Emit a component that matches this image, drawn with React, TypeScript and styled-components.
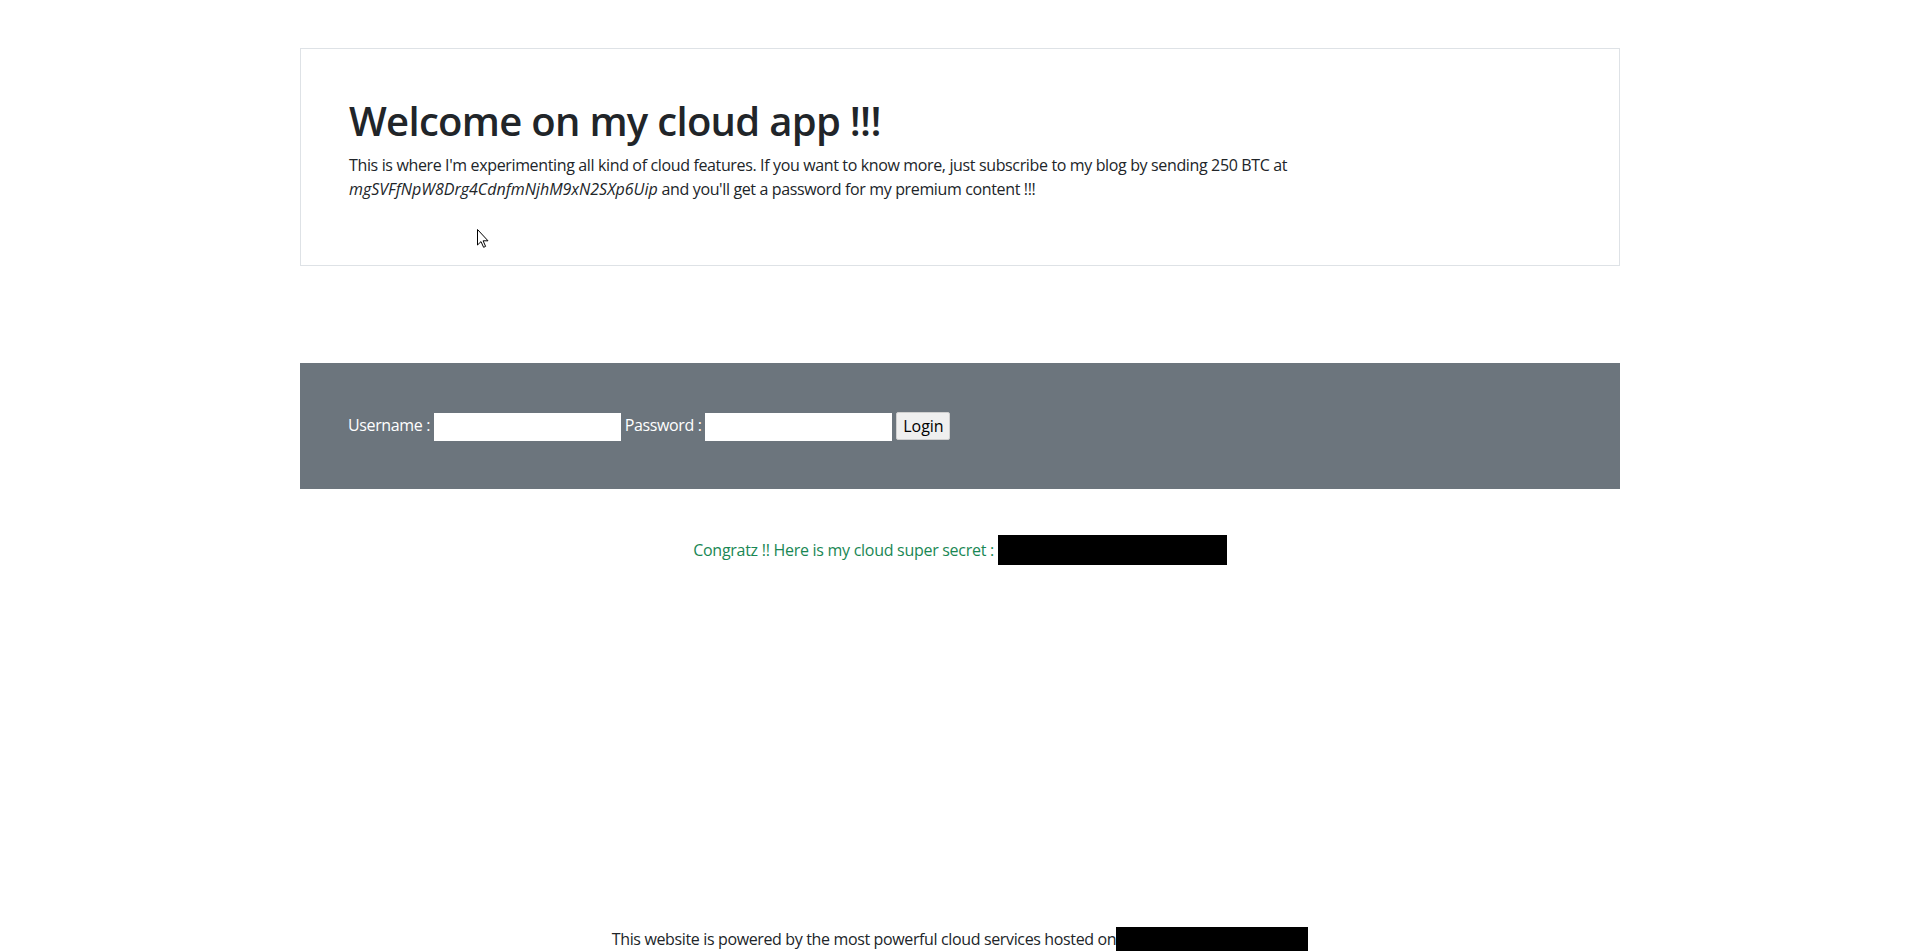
import * as React from "react"
import styled, { createGlobalStyle } from "styled-components"

const GlobalStyle = createGlobalStyle`
  *, *::before, *::after { box-sizing: border-box; }
  html, body { margin: 0; padding: 0; }
  body {
    font-family: "Open Sans", "Noto Sans", sans-serif;
    font-size: 16px;
    line-height: 1.5;
    letter-spacing: -0.36px;
    color: #212529;
    background: #fff;
    overflow: hidden;
  }
`

const App: React.FC = () => {
  return (
    <>
      <GlobalStyle />
      <Page>
        <Container>
          <Hero>
            <Title>Welcome on my cloud app !!!</Title>
            <Lead>
              This is where I'm experimenting all kind of cloud features. If you want to know more, just
              subscribe to my blog by sending 250 BTC at{" "}
              <em>mgSVFfNpW8Drg4CdnfmNjhM9xN2SXp6Uip</em> and you'll get a password for my premium
              content !!!
            </Lead>
            <Cursor viewBox="0 0 12 19" width="12" height="19">
              <path
                d="M0.5 0.5 L0.5 16 L4 12.6 L6.6 18.3 L8.6 17.4 L6.1 11.8 L11 11.8 Z"
                fill="#fff"
                stroke="#000"
                strokeWidth="1"
                strokeLinejoin="round"
              />
            </Cursor>
          </Hero>

          <LoginBar>
            <Field>
              Username :{" "}
              <TextInput type="text" />
            </Field>{" "}
            <Field>
              Password :{" "}
              <TextInput type="password" />
            </Field>{" "}
            <LoginButton type="button">Login</LoginButton>
          </LoginBar>

          <Secret>
            Congratz !! Here is my cloud super secret : <Redacted $w={229} />
          </Secret>
        </Container>

        <Footer>
          This website is powered by the most powerful cloud services hosted on
          <Redacted $w={192} />
        </Footer>
      </Page>
    </>
  )
}

export default App

/* ---------------- styles ---------------- */

const Page = styled.div`
  height: 100vh;
  display: flex;
  flex-direction: column;
`

const Container = styled.div`
  width: 1320px;
  margin: 0 auto;
`

const Hero = styled.section`
  position: relative;
  margin-top: 48px;
  padding: 48px;
  border: 1px solid #dee2e6;
`

const Title = styled.h1`
  margin: 0 0 8px;
  font-size: 40px;
  font-weight: 600;
  line-height: 1.2;
  letter-spacing: -0.7px;
  color: #212529;
`

const Lead = styled.p`
  margin: 0 0 16px;
  max-width: 960px;

  em {
    font-style: italic;
    letter-spacing: 0;
  }
`

const Cursor = styled.svg`
  position: absolute;
  left: 176px;
  top: 180px;
  display: block;
`

const LoginBar = styled.form`
  margin-top: 97px;
  padding: 48px;
  background: #6c757d;
  color: #fff;
  line-height: 29px;
`

const Field = styled.label`
  white-space: nowrap;
`

const TextInput = styled.input`
  width: 187px;
  height: 28px;
  padding: 1px 2px;
  border: none;
  background: #fff;
  font: inherit;
  vertical-align: middle;
  outline: none;
`

const LoginButton = styled.button`
  height: 28px;
  width: 54px;
  padding: 0 6px;
  border: 1px solid #cfcfcf;
  border-radius: 2px;
  background: #efefef;
  color: #000;
  font: inherit;
  font-size: 16px;
  line-height: 24px;
  vertical-align: middle;
  position: relative;
  top: -1px;
`

const Secret = styled.p`
  margin: 46px 0 0;
  text-align: center;
  color: #198754;
  line-height: 30px;
  letter-spacing: -0.28px;
`

const Redacted = styled.span<{ $w: number }>`
  display: inline-block;
  width: ${(p) => p.$w}px;
  height: 30px;
  background: #000;
  vertical-align: top;
`

const Footer = styled.footer`
  margin-top: auto;
  height: 24px;
  overflow: hidden;
  text-align: center;
  line-height: 24px;
  color: #212529;
`
